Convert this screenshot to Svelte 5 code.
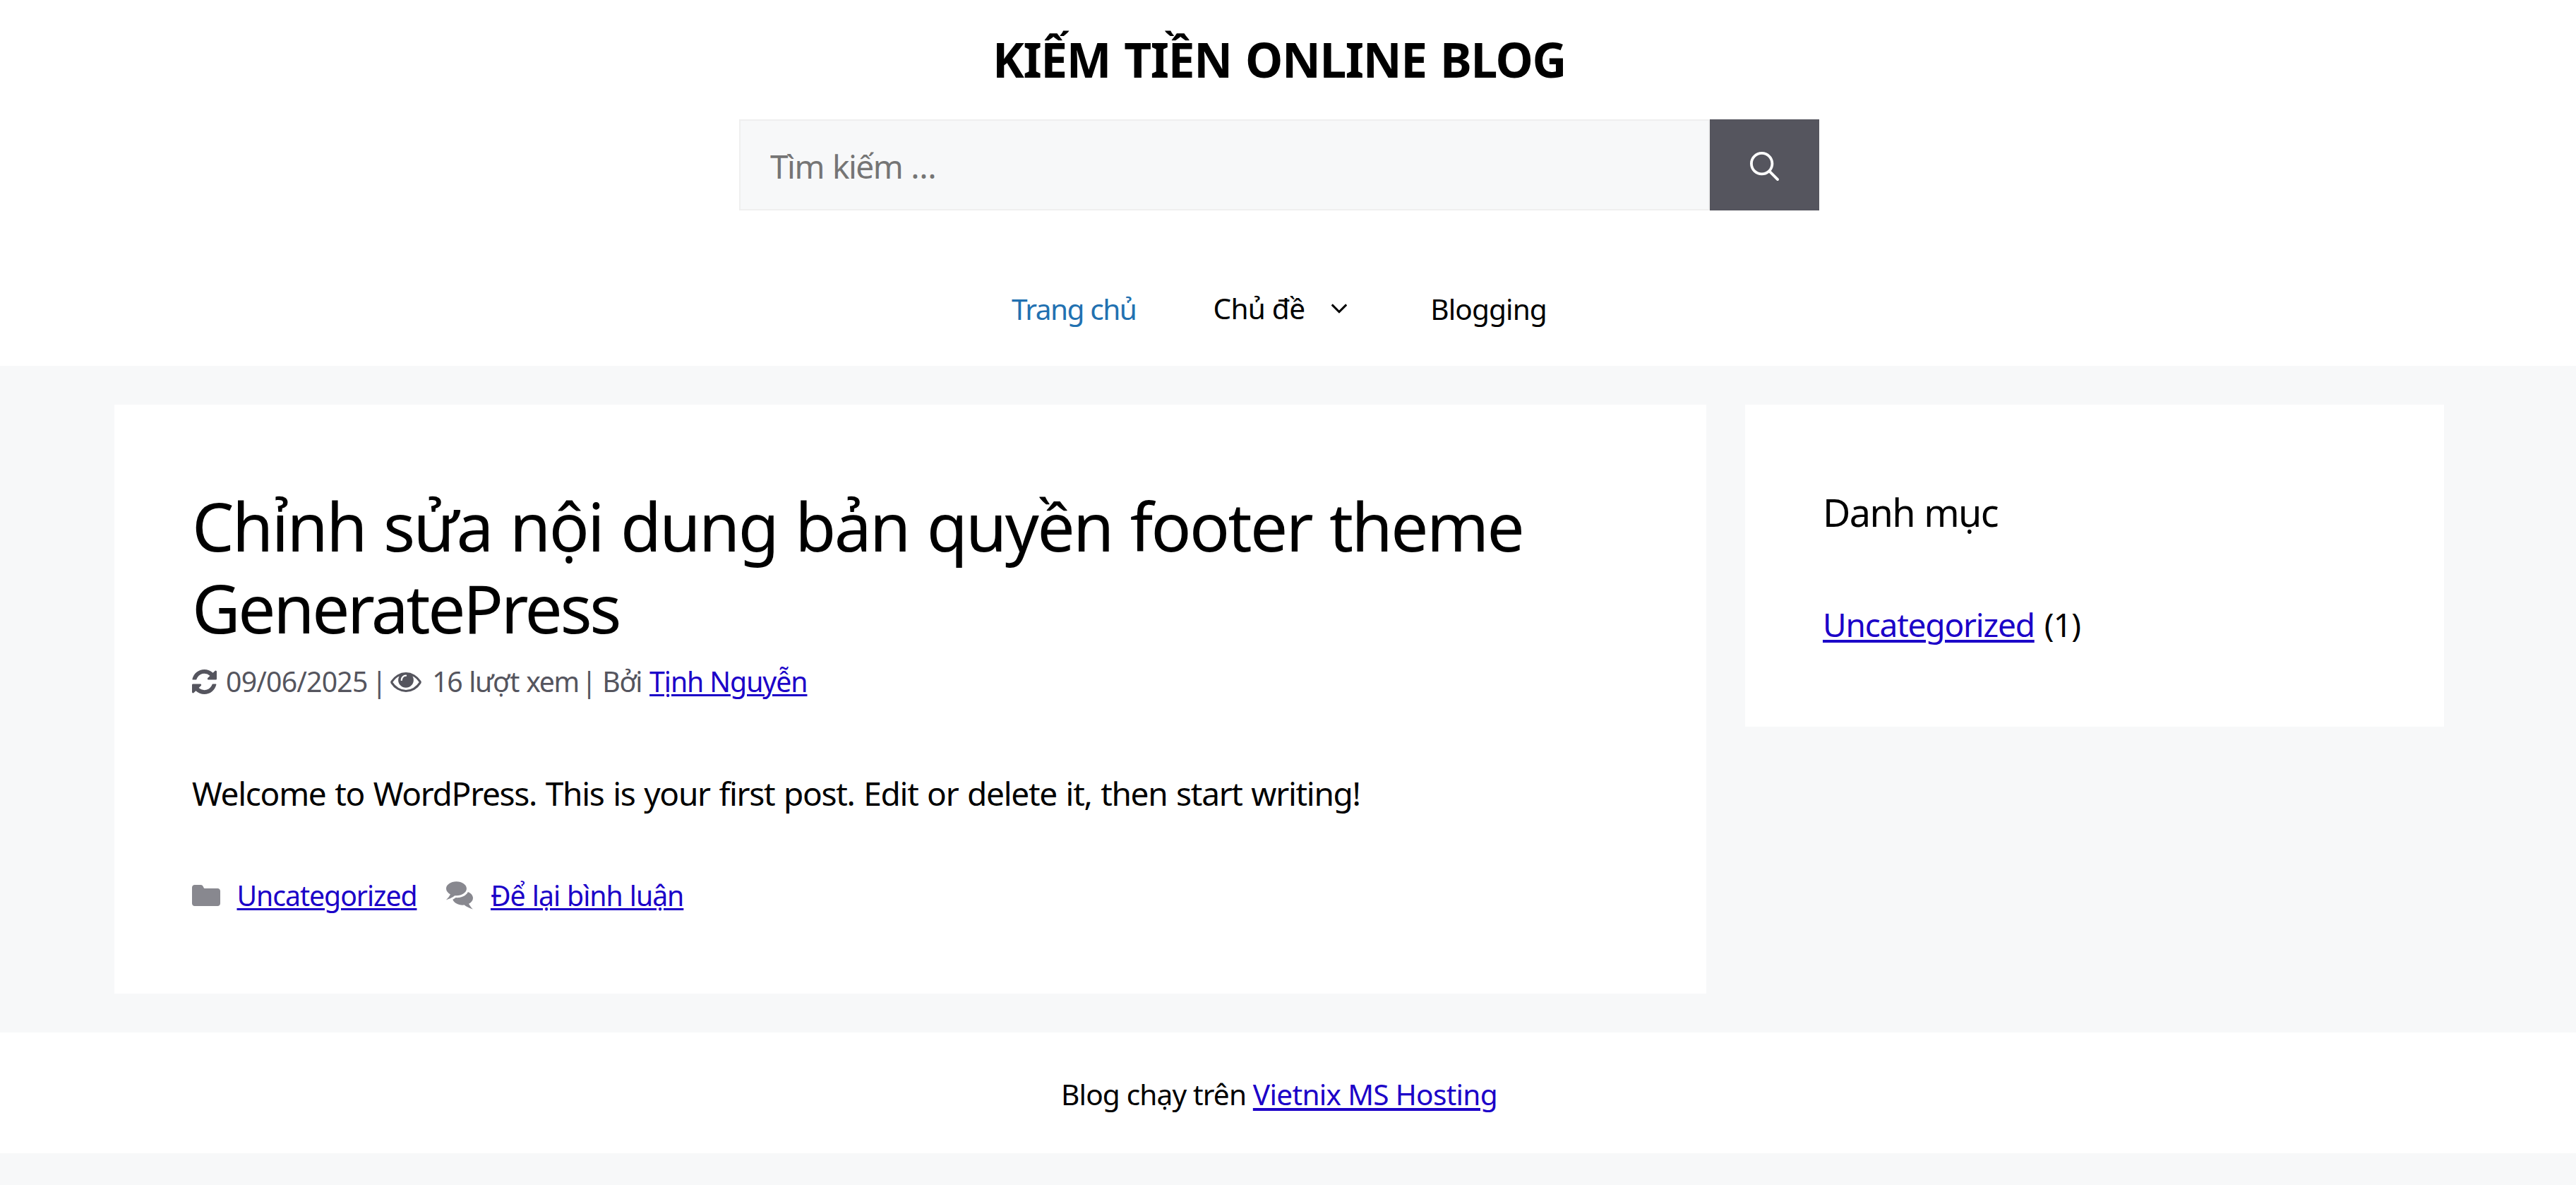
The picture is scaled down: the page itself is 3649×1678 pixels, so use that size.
<script>
    let search = $state('')

    const post = {
        title: ['Chỉnh sửa nội dung bản quyền footer theme', 'GeneratePress'],
        date: '09/06/2025',
        views: 16,
        author: 'Tịnh Nguyễn',
        text: 'Welcome to WordPress. This is your first post. Edit or delete it, then start writing!',
        category: 'Uncategorized'
    }

    const categories = [{ name: 'Uncategorized', count: 1 }]
</script>

<div class="page">
    <header>
        <a class="site-title" href="#top">KIẾM TIỀN ONLINE BLOG</a>
        <form class="search">
            <input type="search" placeholder="Tìm kiếm …" aria-label="Tìm kiếm" bind:value={search} />
            <button type="button" aria-label="Tìm kiếm">
                <svg viewBox="0 0 512 512"><path fill-rule="evenodd" clip-rule="evenodd" d="M208 48c-88.366 0-160 71.634-160 160s71.634 160 160 160 160-71.634 160-160S296.366 48 208 48zM0 208C0 93.125 93.125 0 208 0s208 93.125 208 208c0 48.741-16.765 93.566-44.843 129.024l133.826 134.018c9.366 9.379 9.355 24.575-.025 33.941-9.379 9.366-24.575 9.355-33.941-.025L337.238 370.987C301.747 399.167 256.839 416 208 416 93.125 416 0 322.875 0 208z"/></svg>
            </button>
        </form>
    </header>

    <nav>
        <a class="home active" href="#home">Trang chủ</a>
        <a class="topics" href="#topics">
            Chủ đề
            <svg viewBox="0 0 330 512"><path d="M305.913 197.085c0 2.266-1.133 4.815-2.833 6.514L171.087 335.593c-1.7 1.7-4.249 2.832-6.515 2.832s-4.815-1.133-6.515-2.832L26.064 203.599c-1.7-1.7-2.832-4.248-2.832-6.514s1.132-4.816 2.832-6.515l14.162-14.163c1.7-1.699 3.966-2.832 6.515-2.832 2.266 0 4.815 1.133 6.515 2.832l111.316 111.317 111.316-111.317c1.7-1.699 4.249-2.832 6.515-2.832s4.815 1.133 6.515 2.832l14.162 14.163c1.7 1.7 2.833 4.249 2.833 6.515z"/></svg>
        </a>
        <a class="blogging" href="#blogging">Blogging</a>
    </nav>

    <div class="content">
        <main>
            <h1>
                <span>{post.title[0]}</span>
                <span class="last">{post.title[1]}</span>
            </h1>

            <div class="meta">
                <svg class="refresh" viewBox="0 0 1536 1536"><path d="M1511 928q0 5-1 7-64 268-268 434.5t-478 166.5q-146 0-282.5-55t-243.5-157l-129 129q-19 19-45 19t-45-19-19-45v-448q0-26 19-45t45-19h448q26 0 45 19t19 45-19 45l-137 137q71 66 161 102t187 36q134 0 250-65t186-179q11-17 53-117 8-23 30-23h192q13 0 22.5 9.5t9.5 22.5zm25-800v448q0 26-19 45t-45 19h-448q-26 0-45-19t-19-45 19-45l138-138q-148-137-349-137-134 0-250 65t-186 179q-11 17-53 117-8 23-30 23h-199q-13 0-22.5-9.5t-9.5-22.5v-7q65-268 270-434.5t480-166.5q146 0 284 55.5t245 156.5l130-129q19-19 45-19t45 19 19 45z"/></svg>
                <time>{post.date}</time>
                <span class="sep">|</span>
                <svg class="eye" viewBox="0 384 1792 1152"><path d="M1664 960q-152-236-381-353 61 104 61 225 0 185-131.5 316.5t-316.5 131.5-316.5-131.5-131.5-316.5q0-121 61-225-229 117-381 353 133 205 333.5 326.5t434.5 121.5 434.5-121.5 333.5-326.5zm-720-384q0-20-14-34t-34-14q-125 0-214.5 89.5t-89.5 214.5q0 20 14 34t34 14 34-14 14-34q0-86 61-147t147-61q20 0 34-14t14-34zm848 384q0 34-20 69-140 230-376.5 368.5t-499.5 138.5-499.5-139-376.5-368q-20-35-20-69t20-69q140-229 376.5-368t499.5-139 499.5 139 376.5 368q20 35 20 69z"/></svg>
                <span class="views">{post.views} lượt xem</span>
                <span class="sep">|</span>
                <span class="by">Bởi</span>
                <a href="#author">{post.author}</a>
            </div>

            <p>{post.text}</p>

            <footer class="entry-footer">
                <svg viewBox="0 0 512 512"><path d="M0 112c0-26.51 21.49-48 48-48h110.014a48 48 0 0143.592 27.907l12.349 26.791A16 16 0 00228.486 128H464c26.51 0 48 21.49 48 48v224c0 26.51-21.49 48-48 48H48c-26.51 0-48-21.49-48-48V112z"/></svg>
                <a class="category" href="#category">{post.category}</a>
                <svg viewBox="0 0 512 512"><path d="M132.838 329.973a435.298 435.298 0 0016.769-9.004c13.363-7.574 26.587-16.142 37.419-25.507 7.544.597 15.27.925 23.098.925 54.905 0 105.634-15.311 143.285-41.28 23.728-16.365 43.115-37.692 54.155-62.645 54.739 22.205 91.498 63.272 91.498 110.286 0 42.186-29.558 79.498-75.09 102.828 23.46 49.216 75.09 101.709 75.09 101.709s-115.837-38.35-154.424-78.46c-9.956 1.12-20.297 1.758-30.793 1.758-88.727 0-162.927-43.071-181.007-100.61z"/><path d="M383.371 132.502c0 70.603-82.961 127.787-185.216 127.787-10.496 0-20.837-.639-30.793-1.757-38.587 40.093-154.424 78.429-154.424 78.429s51.63-52.472 75.09-101.67c-45.532-23.321-75.09-60.619-75.09-102.79C12.938 61.9 95.9 4.716 198.155 4.716 300.41 4.715 383.37 61.9 383.37 132.502z"/></svg>
                <a class="reply" href="#respond">Để lại bình luận</a>
            </footer>
        </main>

        <aside>
            <h2>Danh mục</h2>
            <ul>
                {#each categories as category}
                    <li><a href="#category">{category.name}</a><span>({category.count})</span></li>
                {/each}
            </ul>
        </aside>
    </div>

    <footer class="site-footer">
        Blog chạy trên <a href="#hosting">Vietnix MS Hosting</a>
    </footer>
</div>

<style>
    :global(body) {
        background-color: #f7f8f9;
    }

    .page {
        font-family: "Noto Sans", "Open Sans", sans-serif;
        font-size: 46px;
        color: #000;
    }

    a {
        color: #1b00c8;
        text-decoration-thickness: 3px;
        text-underline-offset: 3px;
        white-space: nowrap;
    }

    header, nav, .site-footer {
        background-color: #fff;
        padding-right: 25px;
    }

    header {
        display: flex;
        flex-direction: column;
        align-items: center;
        padding-top: 41px;
        padding-bottom: 58px;
    }

    .site-title {
        color: #000;
        font-size: 67.5px;
        font-weight: bold;
        line-height: 86px;
        letter-spacing: -1.35px;
        word-spacing: 3px;
        text-decoration: none;
    }

    .search {
        display: flex;
        width: 1530px;
        height: 129px;
        margin-top: 42px;
    }

    input {
        flex: 1;
        box-sizing: border-box;
        background-color: #f7f8f9;
        border: 2px solid #efefef;
        border-radius: 0;
        outline: none;
        padding: 3px 42px 0;
        font-family: inherit;
        font-size: 46px;
        letter-spacing: -1.5px;
        word-spacing: 1.5px;
        appearance: none;
    }

    input::placeholder {
        color: #757575;
    }

    button {
        display: flex;
        align-items: center;
        justify-content: center;
        width: 155px;
        padding: 3px 0 0;
        border: none;
        background-color: #55555e;
    }

    button svg {
        width: 41px;
        height: 41px;
        fill: #fff;
    }

    nav {
        display: flex;
        justify-content: center;
        gap: 109px;
        height: 162px;
        line-height: 164px;
        font-size: 40.6px;
    }

    nav a {
        color: #000;
        text-decoration: none;
        letter-spacing: -0.9px;
    }

    nav .active {
        color: #2271b1;
    }

    nav .home {
        letter-spacing: -1.45px;
    }

    nav .topics {
        display: flex;
        align-items: center;
        gap: 36px;
        margin-right: 7px;
        letter-spacing: -0.75px;
    }

    .topics svg {
        width: 26px;
        height: 40px;
    }

    .content {
        display: flex;
        align-items: flex-start;
        gap: 55px;
        margin: 55px 0 55px 162px;
    }

    main {
        box-sizing: border-box;
        width: 2255px;
        padding: 114px 110px 109px;
        background-color: #fff;
    }

    h1 {
        margin: 0;
        font-size: 94.3px;
        font-weight: normal;
        line-height: 116px;
        letter-spacing: -2.55px;
        word-spacing: 3px;
    }

    h1 span {
        display: block;
        white-space: nowrap;
    }

    h1 .last {
        letter-spacing: -3.3px;
    }

    .meta {
        display: flex;
        align-items: center;
        margin-top: 16px;
        color: #55555e;
        font-size: 39.2px;
        line-height: 60px;
        white-space: nowrap;
    }

    .meta svg {
        fill: #55555e;
    }

    .refresh {
        width: 35px;
        height: 35px;
        margin-right: 13px;
    }

    time {
        margin-right: 6px;
        letter-spacing: -0.79px;
    }

    .eye {
        width: 44px;
        height: 28px;
        margin: 2px 15px 0 5px;
    }

    .views {
        margin-right: 4px;
        letter-spacing: -1.4px;
        word-spacing: 1.3px;
    }

    .by {
        margin: 0 11px 0 8px;
        letter-spacing: -1.3px;
    }

    .meta a {
        letter-spacing: -1.05px;
    }

    p {
        margin: 93px 0 80px;
        line-height: 70px;
        letter-spacing: -1.29px;
        word-spacing: 2px;
        white-space: nowrap;
    }

    .entry-footer {
        display: flex;
        align-items: center;
        font-size: 39.2px;
        line-height: 60px;
    }

    .entry-footer svg {
        width: 40px;
        height: 40px;
        margin-right: 23.5px;
        fill: #88888f;
    }

    .category {
        margin-right: 41px;
        letter-spacing: -1.05px;
    }

    .reply {
        letter-spacing: -1px;
        word-spacing: 0.9px;
    }

    aside {
        box-sizing: border-box;
        width: 990px;
        padding: 111px 110px 110px;
        background-color: #fff;
    }

    h2 {
        margin: 0 0 83px;
        font-size: 54px;
        font-weight: normal;
        line-height: 82px;
        letter-spacing: -1.65px;
        word-spacing: 1px;
    }

    ul {
        margin: 0;
        padding: 0;
        list-style: none;
        line-height: 70px;
    }

    li {
        display: flex;
        gap: 14px;
    }

    li a {
        letter-spacing: -1.2px;
    }

    li span {
        letter-spacing: -0.8px;
    }

    li a, .site-footer a {
        text-decoration-thickness: 4px;
        text-underline-offset: 4px;
    }

    .site-footer {
        padding-top: 58px;
        padding-bottom: 53px;
        text-align: center;
        font-size: 40.6px;
        line-height: 60px;
        letter-spacing: -0.85px;
    }

    .site-footer a {
        letter-spacing: -0.7px;
    }
</style>
